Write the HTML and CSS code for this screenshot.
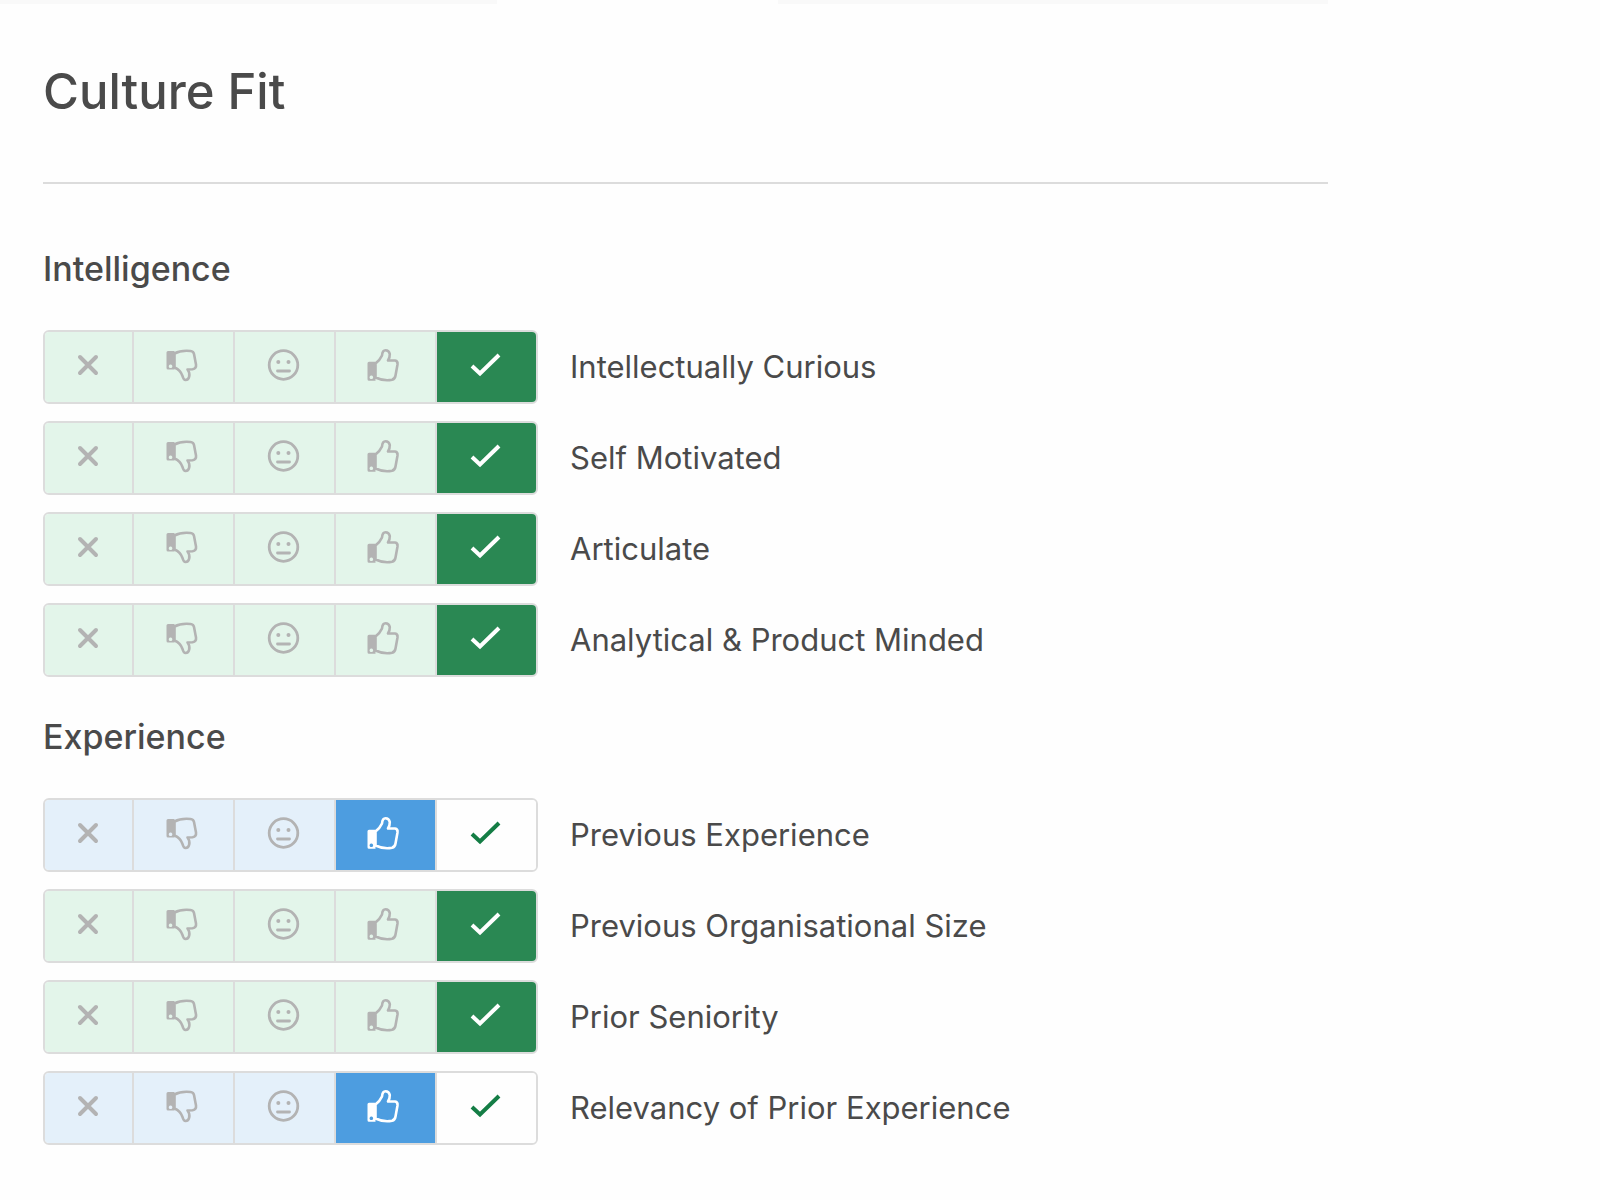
FILE: index.html
```html
<!DOCTYPE html>
<html lang="en">
<head>
<meta charset="utf-8">
<meta name="viewport" content="width=device-width, initial-scale=1">
<title>Culture Fit</title>
<link rel="stylesheet" href="styles.css">
</head>
<body>
<svg class="sprite" aria-hidden="true">
  <symbol id="cross" viewBox="0 0 36 36"><path d="M10 10 26 26M26 10 10 26" fill="none" stroke="currentColor" stroke-width="4" stroke-linecap="round"/></symbol>
  <symbol id="down" viewBox="0 0 36 36"><path fill="currentColor" fill-rule="evenodd" d="M3 4H9.5V22.5H3Q1.500 22.500 1.500 21V5.500Q1.500 4 3 4ZM5.500 17.500a1.800 1.800 0 1 0 .1 0Z"/><path d="M9.500 6.500C14 4 20 3.500 25.500 4Q28.500 4.300 29 7L31 17.500Q31.500 21.500 27.500 22.300L22.500 22.500Q25 25.500 24.200 29.500Q23.500 33 20.500 33Q18.500 33 17.500 29Q15.500 23 9.500 20.500Z" fill="none" stroke="currentColor" stroke-width="2.600" stroke-linejoin="round"/></symbol>
  <symbol id="neutral" viewBox="0 0 36 36"><g fill="none" stroke="currentColor" stroke-width="2.800" stroke-linecap="round"><circle cx="17.500" cy="18" r="14.300"/><path d="M11.500 24H23.500"/></g><g fill="currentColor"><circle cx="12.300" cy="15" r="2"/><circle cx="22.500" cy="15" r="2"/></g></symbol>
  <symbol id="up" viewBox="0 0 36 36"><path fill="currentColor" fill-rule="evenodd" d="M2 14.700H8.500V33.700H2Q.5 33.700 .5 32.200V16.200Q.5 14.700 2 14.700ZM4.300 28.500a1.800 1.800 0 1 0 .1 0Z"/><path d="M8.500 16.500Q13 13 15 8.500Q15.500 3.300 18.500 3.300Q22 3.300 22.800 7Q23 10 21 13.500H28Q31 14 30.500 17.500L28.500 28.500Q28 32 25 32.800Q17 34.500 8.500 30.500Z" fill="none" stroke="currentColor" stroke-width="2.600" stroke-linejoin="round"/></symbol>
  <symbol id="check" viewBox="0 0 36 36"><path d="M4 19 12 26.500 31 8" fill="none" stroke="currentColor" stroke-width="4"/></symbol>
</svg>
<div class="tabs" aria-hidden="true"><span class="tab"></span><span class="tab active"></span><span class="tab"></span></div>
<main class="scorecard">
  <h1 class="title">Culture Fit</h1>

  <section class="section">
    <h2 class="heading">Intelligence</h2>
    <ul class="rows">
      <li class="row">
        <div class="rating strong" role="group" aria-labelledby="r1">
          <button type="button" aria-label="Strong no"><svg><use href="#cross"/></svg></button><button type="button" aria-label="No"><svg><use href="#down"/></svg></button><button type="button" aria-label="Neutral"><svg><use href="#neutral"/></svg></button><button type="button" aria-label="Yes"><svg><use href="#up"/></svg></button><button type="button" aria-label="Strong yes" aria-pressed="true"><svg><use href="#check"/></svg></button>
        </div>
        <span class="label" id="r1">Intellectually Curious</span>
      </li>
      <li class="row">
        <div class="rating strong" role="group" aria-labelledby="r2">
          <button type="button" aria-label="Strong no"><svg><use href="#cross"/></svg></button><button type="button" aria-label="No"><svg><use href="#down"/></svg></button><button type="button" aria-label="Neutral"><svg><use href="#neutral"/></svg></button><button type="button" aria-label="Yes"><svg><use href="#up"/></svg></button><button type="button" aria-label="Strong yes" aria-pressed="true"><svg><use href="#check"/></svg></button>
        </div>
        <span class="label" id="r2">Self Motivated</span>
      </li>
      <li class="row">
        <div class="rating strong" role="group" aria-labelledby="r3">
          <button type="button" aria-label="Strong no"><svg><use href="#cross"/></svg></button><button type="button" aria-label="No"><svg><use href="#down"/></svg></button><button type="button" aria-label="Neutral"><svg><use href="#neutral"/></svg></button><button type="button" aria-label="Yes"><svg><use href="#up"/></svg></button><button type="button" aria-label="Strong yes" aria-pressed="true"><svg><use href="#check"/></svg></button>
        </div>
        <span class="label" id="r3">Articulate</span>
      </li>
      <li class="row">
        <div class="rating strong" role="group" aria-labelledby="r4">
          <button type="button" aria-label="Strong no"><svg><use href="#cross"/></svg></button><button type="button" aria-label="No"><svg><use href="#down"/></svg></button><button type="button" aria-label="Neutral"><svg><use href="#neutral"/></svg></button><button type="button" aria-label="Yes"><svg><use href="#up"/></svg></button><button type="button" aria-label="Strong yes" aria-pressed="true"><svg><use href="#check"/></svg></button>
        </div>
        <span class="label" id="r4">Analytical &amp; Product Minded</span>
      </li>
    </ul>
  </section>

  <section class="section">
    <h2 class="heading">Experience</h2>
    <ul class="rows">
      <li class="row">
        <div class="rating good" role="group" aria-labelledby="r5">
          <button type="button" aria-label="Strong no"><svg><use href="#cross"/></svg></button><button type="button" aria-label="No"><svg><use href="#down"/></svg></button><button type="button" aria-label="Neutral"><svg><use href="#neutral"/></svg></button><button type="button" aria-label="Yes" aria-pressed="true"><svg><use href="#up"/></svg></button><button type="button" aria-label="Strong yes"><svg><use href="#check"/></svg></button>
        </div>
        <span class="label" id="r5">Previous Experience</span>
      </li>
      <li class="row">
        <div class="rating strong" role="group" aria-labelledby="r6">
          <button type="button" aria-label="Strong no"><svg><use href="#cross"/></svg></button><button type="button" aria-label="No"><svg><use href="#down"/></svg></button><button type="button" aria-label="Neutral"><svg><use href="#neutral"/></svg></button><button type="button" aria-label="Yes"><svg><use href="#up"/></svg></button><button type="button" aria-label="Strong yes" aria-pressed="true"><svg><use href="#check"/></svg></button>
        </div>
        <span class="label" id="r6">Previous Organisational Size</span>
      </li>
      <li class="row">
        <div class="rating strong" role="group" aria-labelledby="r7">
          <button type="button" aria-label="Strong no"><svg><use href="#cross"/></svg></button><button type="button" aria-label="No"><svg><use href="#down"/></svg></button><button type="button" aria-label="Neutral"><svg><use href="#neutral"/></svg></button><button type="button" aria-label="Yes"><svg><use href="#up"/></svg></button><button type="button" aria-label="Strong yes" aria-pressed="true"><svg><use href="#check"/></svg></button>
        </div>
        <span class="label" id="r7">Prior Seniority</span>
      </li>
      <li class="row">
        <div class="rating good" role="group" aria-labelledby="r8">
          <button type="button" aria-label="Strong no"><svg><use href="#cross"/></svg></button><button type="button" aria-label="No"><svg><use href="#down"/></svg></button><button type="button" aria-label="Neutral"><svg><use href="#neutral"/></svg></button><button type="button" aria-label="Yes" aria-pressed="true"><svg><use href="#up"/></svg></button><button type="button" aria-label="Strong yes"><svg><use href="#check"/></svg></button>
        </div>
        <span class="label" id="r8">Relevancy of Prior Experience</span>
      </li>
    </ul>
  </section>
</main>
</body>
</html>
```
FILE: styles.css
```css
* { box-sizing: border-box; }

body {
  margin: 0;
  background: #fefefe;
  color: #4a4a4a;
  font-family: Inter, "Liberation Sans", sans-serif;
}

.sprite { display: none; }

/* lower edge of the tab strip */
.tabs {
  display: grid;
  grid-template-columns: 497fr 282fr 550fr;
  height: 4px;
  margin-right: 17%;
}
.tab { background: #f9f9f9; }
.tab.active { background: #fefefe; }

.scorecard {
  padding: 56px 17% 56px 43px;
}

.title {
  margin: 0;
  padding-bottom: 58px;
  border-bottom: 2px solid #dcdcdc;
  font-size: 49px;
  line-height: 64px;
  font-weight: 500;
}

.section { padding-top: 57px; }
.section + .section { padding-top: 32px; }

.heading {
  margin: 0 0 33px;
  font-size: 34px;
  line-height: 56px;
  font-weight: 500;
}

.rows {
  display: grid;
  gap: 17px;
  margin: 0;
  padding: 0;
  list-style: none;
}

.row {
  display: flex;
  align-items: center;
  gap: 32px;
}

.rating {
  display: grid;
  grid-template-columns: 87px 101px 101px 101px 101px;
  flex: none;
  height: 74px;
  border: 2px solid #dcdcdc;
  border-radius: 6px;
  overflow: hidden;
}

.rating button {
  display: flex;
  align-items: center;
  justify-content: center;
  margin: 0;
  padding: 0 2px 4px 0;
  border: 0;
  border-left: 2px solid #dcdcdc;
  color: #b3b3b3;
  cursor: pointer;
}
.rating button:first-child { border-left: 0; }
.rating svg { width: 36px; height: 36px; }

.strong button { background: #e3f5ea; }
.good button { background: #e4f0fa; }
.good button:last-child { background: #fefefe; color: #147d45; }

.rating button[aria-pressed="true"] { color: #fff; }
.strong button[aria-pressed="true"] { background: #2a8853; }
.good button[aria-pressed="true"] { background: #4d9de0; }

.label {
  font-size: 31px;
  line-height: 40px;
}
```
